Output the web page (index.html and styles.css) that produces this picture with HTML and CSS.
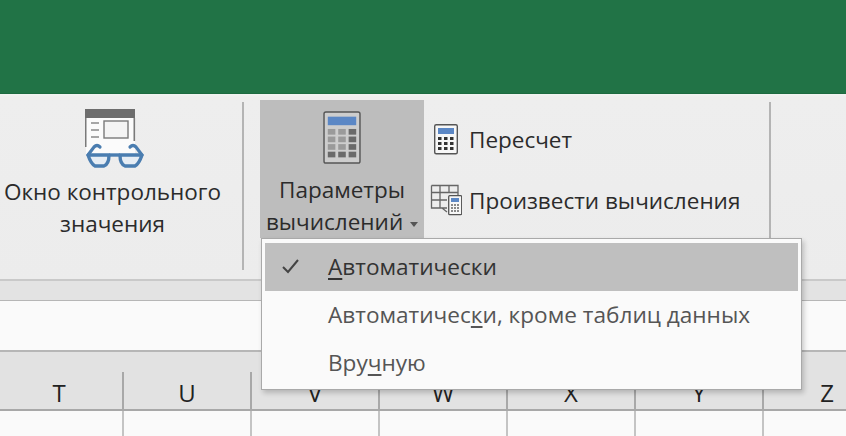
FILE: index.html
```html
<!DOCTYPE html>
<html lang="ru">
<head>
<meta charset="utf-8">
<title>Параметры вычислений</title>
<link rel="stylesheet" href="styles.css">
</head>
<body>
<div class="page">
  <div class="titlebar"></div>
  <div class="ribbon">
    <div class="watch">
      <svg class="watch-icon" width="60" height="60" viewBox="0 0 60 60">
        <rect x="1" y="2" width="49" height="44" fill="#fbfbfb"/>
        <rect x="0" y="0" width="50" height="9" fill="#6d6d6d"/>
        <path d="M.7 9V38M49.3 9V32" stroke="#7a7a7a" stroke-width="1.6" fill="none"/>
        <path d="M6 14h8M6 21h8M6 28h8" stroke="#8a8a8a" stroke-width="1.6"/>
        <rect x="19" y="12" width="24" height="17" fill="#f4f4f4" stroke="#7a7a7a" stroke-width="1.4"/>
        <path d="M3 46L9 38Q12 35 15 38M57 46L51 38Q48 35 45 38" fill="none" stroke="#4a7db0" stroke-width="3.2" stroke-linecap="round"/>
        <path d="M3 46H24Q24 55 19 57H10Q6 55 3 46ZM57 46H35Q35 55 40 57H50Q54 55 57 46Z" fill="#e6edf4" stroke="#4a7db0" stroke-width="3.4" stroke-linejoin="round"/>
        <path d="M24 46H35" stroke="#4a7db0" stroke-width="3.4"/>
      </svg>
      <div class="big-label">Окно контрольного<br>значения</div>
    </div>
    <div class="sep"></div>
    <div class="calc-options">
      <svg class="calc-icon" width="40" height="56" viewBox="0 0 40 56">
        <rect x="1" y="1" width="38" height="54" rx="2" fill="#cdcdcd" stroke="#555" stroke-width="1.5"/>
        <rect x="5" y="6" width="30" height="9" fill="#5b87c5"/>
        <g fill="#9a9a9a">
          <rect x="5" y="19" width="8" height="6"/><rect x="16" y="19" width="8" height="6"/><rect x="27" y="19" width="8" height="6" fill="#6a6a6a"/>
          <rect x="5" y="27" width="8" height="6"/><rect x="16" y="27" width="8" height="6"/><rect x="27" y="27" width="8" height="6" fill="#6a6a6a"/>
          <rect x="5" y="35" width="8" height="6"/><rect x="16" y="35" width="8" height="6"/><rect x="27" y="35" width="8" height="6" fill="#6a6a6a"/>
          <rect x="5" y="43" width="8" height="6" fill="#6a6a6a"/><rect x="16" y="43" width="8" height="6" fill="#6a6a6a"/><rect x="27" y="43" width="8" height="6" fill="#6a6a6a"/>
        </g>
      </svg>
      <div class="big-label">Параметры<br>вычислений <span class="caret"></span></div>
    </div>
    <div class="small-actions">
      <div class="small-action">
        <svg width="32" height="32" viewBox="0 0 32 32">
          <rect x="4.7" y="1.7" width="22.6" height="29" rx="1.5" fill="#f7f7f7" stroke="#555" stroke-width="1.4"/>
          <rect x="8" y="5" width="16" height="6" fill="#5b87c5"/>
          <g fill="#333">
            <rect x="8" y="14" width="3.5" height="3"/><rect x="14" y="14" width="3.5" height="3"/><rect x="20" y="14" width="3.5" height="3"/>
            <rect x="8" y="19" width="3.5" height="3"/><rect x="14" y="19" width="3.5" height="3"/><rect x="20" y="19" width="3.5" height="3"/>
            <rect x="8" y="24" width="3.5" height="3"/><rect x="14" y="24" width="3.5" height="3"/><rect x="20" y="24" width="3.5" height="3"/>
          </g>
        </svg>
        <span class="small-text">Пересчет</span>
      </div>
      <div class="small-action">
        <svg width="32" height="32" viewBox="0 0 32 32">
          <path d="M1.5 1.5H28V14M1.5 1.5V24H17M1.5 8.5H28M1.5 16H17M10 1.5V24M19 1.5V8.5M12 24L17 28" fill="none" stroke="#666" stroke-width="1.3"/>
          <rect x="18.7" y="11.7" width="13" height="19" rx="1" fill="#f7f7f7" stroke="#555" stroke-width="1.3"/>
          <rect x="21" y="14" width="8" height="4" fill="#5b87c5"/>
          <path d="M21 21h2M24 21h2M27 21h2M21 24h2M24 24h2M27 24h2M21 27h2M24 27h2M27 27h2" stroke="#666" stroke-width="1.6"/>
        </svg>
        <span class="small-text">Произвести вычисления</span>
      </div>
    </div>
    <div class="sep sep-end"></div>
  </div>
  <div class="band"></div>
  <div class="formula"></div>
  <div class="cols">
    <div class="col">T</div><div class="col">U</div><div class="col">V</div><div class="col">W</div><div class="col">X</div><div class="col">Y</div><div class="col">Z</div>
  </div>
  <div class="cells">
    <div class="cell"></div><div class="cell"></div><div class="cell"></div><div class="cell"></div><div class="cell"></div><div class="cell"></div><div class="cell"></div>
  </div>
  <div class="menu">
    <div class="menu-item menu-item-active"><svg class="check" width="20" height="16" viewBox="0 0 20 16"><path d="M2 9L7 14L17 2" fill="none" stroke="#444" stroke-width="2"/></svg><span><u>А</u>втоматически</span></div>
    <div class="menu-item"><span>Автоматичес<u>к</u>и, кроме таблиц данных</span></div>
    <div class="menu-item"><span>Вру<u>ч</u>ную</span></div>
  </div>
</div>
</body>
</html>
```
FILE: styles.css
```css
* { box-sizing: border-box; }
html, body { margin: 0; padding: 0; }
body { width: 846px; height: 436px; overflow: hidden; background: #fafafa; font-family: "Open Sans", "Noto Sans", sans-serif; color: #2b2b2b; }
.page { position: relative; width: 846px; height: 436px; overflow: hidden; }
.titlebar { height: 94px; background: #217346; border-bottom: 1px solid #1d6a40; }
.ribbon { display: flex; align-items: stretch; height: 187px; padding: 6px 0 1px; background: linear-gradient(#f1f4f1 0, #eeeeee 3px, #ececec 100%); border-bottom: 2px solid #c9c9c9; }
.watch { width: 225px; flex: none; display: flex; flex-direction: column; align-items: center; padding-top: 9px; }
.watch-icon { margin-left: 5px; }
.big-label { font-size: 22.5px; line-height: 32px; text-align: center; white-space: nowrap; }
.watch .big-label { margin-top: 7px; }
.sep { width: 2px; flex: none; margin: 2px 16px 0 17px; height: 168px; background: #b4b4b4; }
.calc-options { width: 164px; height: 138px; flex: none; display: flex; flex-direction: column; align-items: center; padding-top: 11px; background: #bdbdbd; margin-right: 6px; }
.calc-options .big-label { margin-top: 10px; }
.caret { display: inline-block; width: 0; height: 0; margin-left: 1px; vertical-align: 3px; border: 4px solid transparent; border-top: 5px solid #555; border-bottom: 0; }
.small-actions { width: 339px; flex: none; display: flex; flex-direction: column; gap: 30px; padding-top: 23px; }
.small-action { display: flex; align-items: center; gap: 7px; height: 31px; font-size: 22.5px; white-space: nowrap; }
.small-text { padding-top: 2px; }
.sep-end { margin: 2px 0 0 0; }
.band { height: 20px; background: #e3e3e3; border-bottom: 1px solid #b6b6b6; }
.formula { height: 51px; background: #fafafa; border-bottom: 2px solid #b6b6b6; }
.cols { display: grid; grid-template-columns: repeat(7, 128px); margin-left: -4px; height: 59px; background: #e2e2e2; border-bottom: 2px solid #a8a8a8; }
.col { position: relative; font-size: 24px; line-height: 1; color: #222; text-align: center; padding: 29px 2px 0 0; }
.col::after { content: ""; position: absolute; right: 0; top: 20px; bottom: 0; width: 2px; background: #a8a8a8; }
.cells { display: grid; grid-template-columns: repeat(7, 128px); margin-left: -4px; height: 30px; }
.cell { border-right: 2px solid #c4c4c4; background: #fafafa; }
.menu { position: absolute; left: 261px; top: 238px; width: 541px; height: 152px; padding: 4px 3px; background: #fafafa; border: 1px solid #a9a9a9; box-shadow: 2px 3px 5px rgba(0,0,0,.2); display: flex; flex-direction: column; }
.menu-item { position: relative; height: 48px; flex: none; padding: 0 0 2px 63px; display: flex; align-items: center; font-size: 22.6px; color: #555; white-space: nowrap; }
.menu-item-active { background: #bfbfbf; color: #333; }
.check { position: absolute; left: 16px; top: 15px; }
u { text-underline-offset: 3px; }
```
